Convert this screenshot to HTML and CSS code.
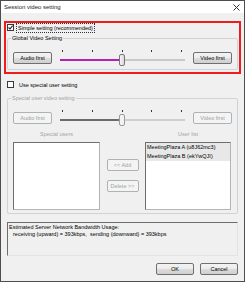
FILE: index.html
```html
<!DOCTYPE html>
<html lang="en">

<head>
  <meta charset="UTF-8" />
  <title>Session video setting</title>
  <link rel="stylesheet" href="styles.css">
</head>

<body>
  <div class="window">
    <div class="titlebar">
      <span class="title">Session video setting</span>
      <svg class="close" width="7" height="7" viewBox="0 0 7 7">
        <path d="M0.5 0.5 L6.5 6.5 M6.5 0.5 L0.5 6.5" stroke="#333" stroke-width="1" fill="none" />
      </svg>
    </div>

    <div class="content">
      <!-- Simple setting, outlined in red -->
      <div class="highlight">
        <div class="check-row">
          <span class="checkbox">
            <svg width="5" height="5" viewBox="0 0 5 5">
              <path d="M0.5 2.5 L2 4 L4.6 0.6" stroke="#222" stroke-width="1.1" fill="none" />
            </svg>
          </span>
          <span class="focus">Simple setting (recommended)</span>
        </div>

        <fieldset class="group global">
          <legend>Global Video Setting</legend>
          <div class="slider-row">
            <button class="btn">Audio first</button>
            <div class="slider">
              <div class="ticks"><i></i><i></i><i></i><i></i><i></i></div>
              <div class="track">
                <span class="fill" style="width: 59px;"></span>
                <span class="thumb"></span>
                <span class="rest"></span>
              </div>
            </div>
            <button class="btn">Video first</button>
          </div>
        </fieldset>
      </div>

      <div class="check-row special-check">
        <span class="checkbox"></span>
        <span class="label">Use special user setting</span>
      </div>

      <!-- Special users, disabled -->
      <fieldset class="group special disabled">
        <legend>Special user video setting</legend>
        <div class="slider-row">
          <button class="btn" disabled>Audio first</button>
          <div class="slider">
            <div class="ticks"><i></i><i></i><i></i><i></i><i></i></div>
            <div class="track">
              <span class="fill" style="width: 59px;"></span>
              <span class="thumb"></span>
              <span class="rest"></span>
            </div>
          </div>
          <button class="btn" disabled>Video first</button>
        </div>

        <div class="lists">
          <div class="list-head">Special users</div>
          <div></div>
          <div class="list-head">User list</div>

          <div class="listbox"></div>
          <div class="list-buttons">
            <button class="btn" disabled>&lt;&lt; Add</button>
            <button class="btn" disabled>Delete &gt;&gt;</button>
          </div>
          <div class="listbox">
            <div class="item">MeetingPlaza A (u8J62mc3)</div>
            <div class="item">MeetingPlaza B (ekYwQJI)</div>
          </div>
        </div>
      </fieldset>

      <div class="estimate">
        <div>Estimated Server Network Bandwidth Usage:</div>
        <div class="indent">receiving (upward) = 393kbps,&nbsp; sending (downward) = 393kbps</div>
      </div>

      <div class="actions">
        <button class="btn">OK</button>
        <button class="btn">Cancel</button>
      </div>
    </div>
  </div>
</body>

</html>
```

FILE: styles.css
```css
* {
  box-sizing: border-box;
}

html,
body {
  margin: 0;
  padding: 0;
}

body {
  width: 245px;
  height: 282px;
  font-family: 'Liberation Sans', Arial, sans-serif;
  font-size: 5.5px;
  color: #000;
  background: #fff;
}

.window {
  width: 245px;
  height: 282px;
  border: 1px solid #4d4d4d;
  background: #f0f0f0;
  display: flex;
  flex-direction: column;
}

.titlebar {
  height: 12px;
  flex: none;
  background: #fff;
  display: flex;
  align-items: center;
  justify-content: space-between;
  padding: 0 4px 0 3px;
  font-size: 6px;
  color: #1a1a1a;
}

.content {
  padding: 8px 3px 0;
  display: flex;
  flex-direction: column;
}

.highlight {
  border: 2px solid #ee1c1c;
  padding: 0 0 2px;
  height: 53px;
}

.check-row {
  height: 9px;
  display: flex;
  align-items: center;
  padding-left: 1px;
  gap: 2px;
  line-height: 8px;
}

.checkbox {
  width: 7px;
  height: 7px;
  border: 1px solid #3a3a3a;
  background: #fff;
  display: flex;
  align-items: center;
  justify-content: center;
  flex: none;
}

.checkbox svg {
  display: block;
}

.focus {
  border: 1px dotted #333;
  padding: 0 1px;
  line-height: 8px;
}

.special-check {
  margin-top: 6px;
  padding-left: 3px;
  gap: 5px;
}

.group {
  margin: 2px 1px 0;
  padding: 8px 4px 3px 5px;
  border: 1px solid #cfd3d6;
  border-radius: 2px;
  min-width: 0;
}

.group legend {
  padding: 0 1px;
  margin-left: -2px;
  line-height: 8px;
}

.special {
  margin: 5px 0 0 3px;
  width: 231px;
}

.disabled,
.disabled legend {
  color: #a3a3a3;
}

.slider-row {
  height: 16px;
  display: flex;
  align-items: center;
  gap: 8px;
}

.btn {
  font-family: inherit;
  font-size: 5.5px;
  color: #000;
  width: 39px;
  height: 12px;
  padding: 0;
  border: 1px solid #707070;
  border-radius: 2px;
  background: linear-gradient(#f3f3f3 0%, #ebebeb 50%, #dddddd 51%, #cfcfcf 100%);
  line-height: 10px;
  flex: none;
}

.btn:disabled {
  color: #a0a0a0;
  border-color: #adb2b5;
  background: #f4f4f4;
}

.slider {
  width: 125px;
  height: 16px;
  display: flex;
  flex-direction: column;
}

.ticks {
  height: 2px;
  display: flex;
  justify-content: space-between;
  padding: 0 3px 0 2px;
}

.ticks i {
  width: 1px;
  height: 2px;
  background: #333;
}

.track {
  margin-top: 1px;
  height: 13px;
  display: flex;
  align-items: center;
}

.fill {
  height: 2px;
  background: #b520b5;
  flex: none;
}

.rest {
  height: 2px;
  flex: 1;
  background: #c9c9c9;
}

.thumb {
  width: 6px;
  height: 12px;
  flex: none;
  border: 1px solid #777;
  border-radius: 2px;
  background: linear-gradient(90deg, #f4f4f4, #d9d9d9);
}

.disabled .fill {
  background: #6c6c6c;
}

.disabled .rest {
  background: #cfcfcf;
}

.disabled .thumb {
  border-color: #9a9a9a;
  background: #f2f2f2;
}

.lists {
  margin-top: 4px;
  display: grid;
  grid-template-columns: 87px 45px 86px;
  grid-template-rows: 8px 68px;
  row-gap: 4px;
}

.list-head {
  text-align: center;
  line-height: 8px;
}

.listbox {
  background: #fff;
  border: 1px solid #b4b4b4;
  border-top-color: #6e6e6e;
  border-left-color: #6e6e6e;
  color: #000;
}

.item {
  height: 9px;
  line-height: 9px;
  padding-left: 1px;
  background: #e8e8e8;
  white-space: nowrap;
}

.list-buttons {
  display: flex;
  flex-direction: column;
  align-items: center;
  gap: 9px;
  padding-top: 17px;
}

.list-buttons .btn {
  width: 32px;
}

.estimate {
  margin: 8px 0 0 3px;
  width: 231px;
  height: 34px;
  padding: 1px 1px;
  border: 1px solid #e3e3e3;
  border-top-color: #6d6d6d;
  border-left-color: #6d6d6d;
  line-height: 7px;
}

.indent {
  padding-left: 4px;
}

.actions {
  margin-top: 7px;
  display: flex;
  justify-content: flex-end;
  gap: 6px;
  padding-right: 3px;
}

.actions .btn {
  width: 38px;
}
```
